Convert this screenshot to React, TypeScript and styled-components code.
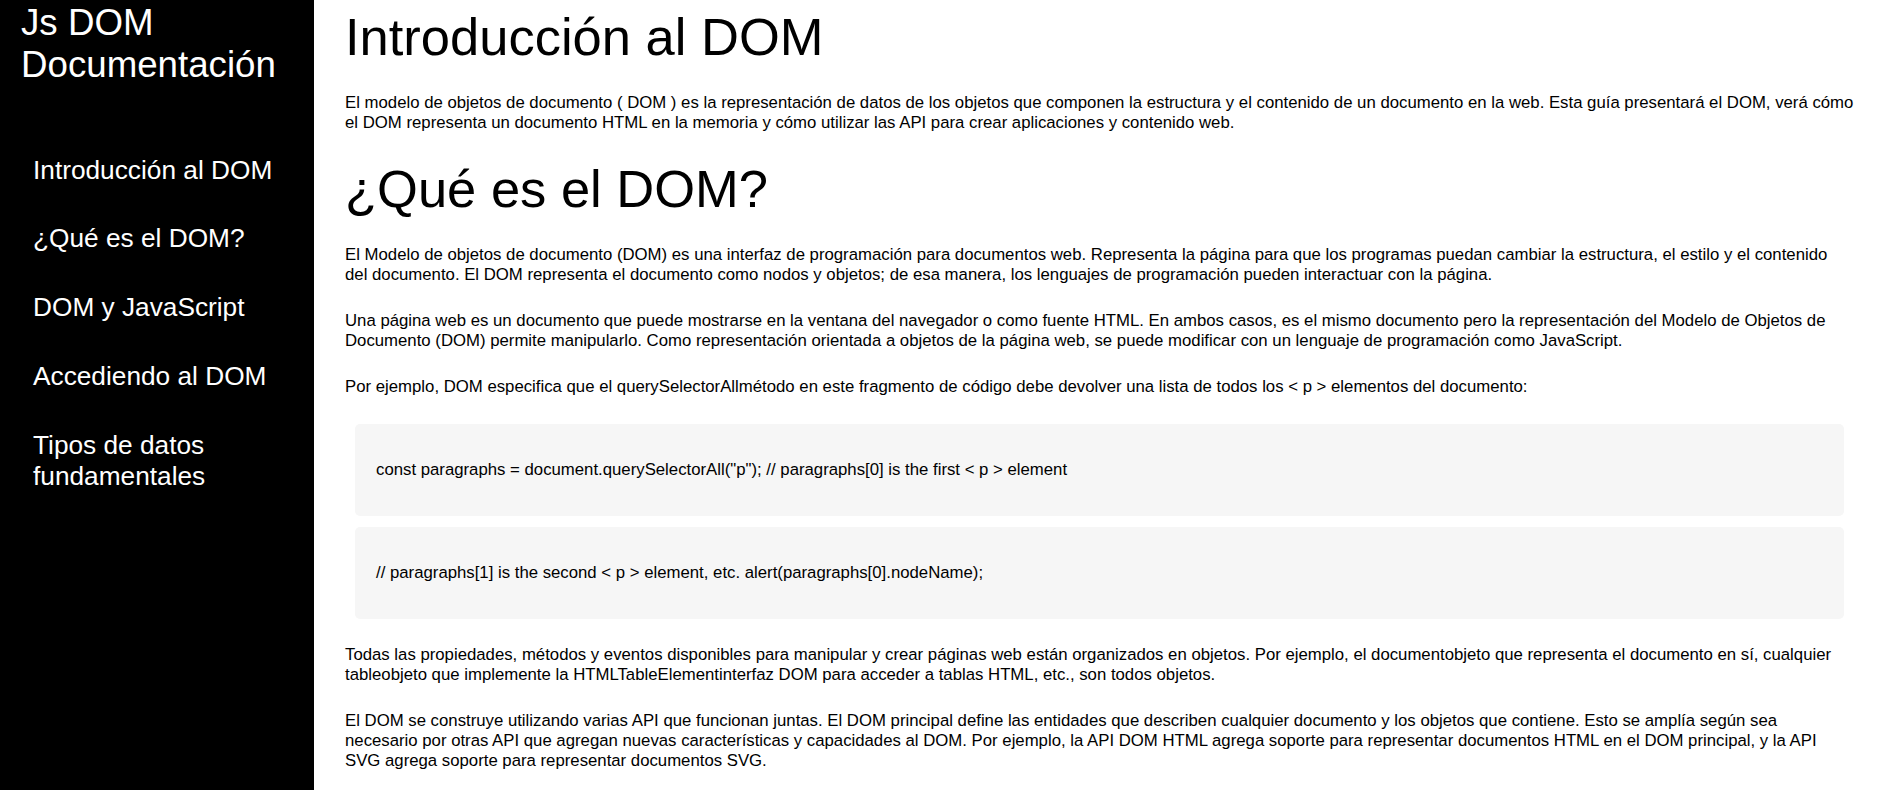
import React from "react";
import styled, { createGlobalStyle } from "styled-components";

const GlobalStyle = createGlobalStyle`
  html, body {
    margin: 0;
    padding: 0;
    background: #ffffff;
  }
  body {
    font-family: "Liberation Sans", Arial, sans-serif;
    color: #000000;
  }
  * { box-sizing: border-box; }
`;

const Page = styled.div`
  display: flex;
  align-items: stretch;
  min-height: 100vh;
`;

const Sidebar = styled.nav`
  flex: 0 0 314px;
  width: 314px;
  background: #000000;
  color: #ffffff;
  padding: 2px 0 0 21px;
`;

const SiteTitle = styled.header`
  font-size: 36.7px;
  line-height: normal;
  font-weight: 400;
  margin: 0;
`;

const NavList = styled.ul`
  list-style: none;
  margin: 68.5px 0 0 0;
  padding: 0 0 0 12px;
  display: flex;
  flex-direction: column;
  gap: 37.8px;
`;

const NavLink = styled.a`
  display: block;
  color: #ffffff;
  text-decoration: none;
  font-size: 26.25px;
  line-height: normal;
  max-width: 240px;
`;

const Main = styled.main`
  flex: 1 1 auto;
  min-width: 0;
  padding: 6px 36px 20px 31px;
`;

const Section = styled.section`
  display: flex;
  flex-direction: column;
  gap: 26px;
  & + & {
    margin-top: 24.5px;
  }
`;

const Heading = styled.h1`
  margin: 0;
  font-size: 52.5px;
  font-weight: 400;
  line-height: normal;
`;

const Para = styled.p`
  margin: 0;
  font-size: 16.75px;
  line-height: 20px;
`;

const CodeGroup = styled.div`
  display: flex;
  flex-direction: column;
  gap: 11px;
  margin: 1px 10px 0;
`;

const CodeBlock = styled.div`
  background: #f6f6f6;
  border-radius: 5px;
  padding: 36px 21px;
  font-size: 16.75px;
  line-height: 20px;
`;

const navItems = [
  "Introducción al DOM",
  "¿Qué es el DOM?",
  "DOM y JavaScript",
  "Accediendo al DOM",
  "Tipos de datos fundamentales",
];

export default function App() {
  return (
    <>
      <GlobalStyle />
      <Page>
        <Sidebar>
          <SiteTitle>Js DOM Documentación</SiteTitle>
          <NavList>
            {navItems.map((item) => (
              <li key={item}>
                <NavLink href="#">{item}</NavLink>
              </li>
            ))}
          </NavList>
        </Sidebar>
        <Main>
          <Section>
            <Heading>Introducción al DOM</Heading>
            <Para>
              El modelo de objetos de documento ( DOM ) es la representación de datos de los objetos que componen la estructura y el contenido de un documento en la web. Esta guía presentará el DOM, verá cómo el DOM representa un documento HTML en la memoria y cómo utilizar las API para crear aplicaciones y contenido web.
            </Para>
          </Section>
          <Section>
            <Heading as="h2">¿Qué es el DOM?</Heading>
            <Para>
              El Modelo de objetos de documento (DOM) es una interfaz de programación para documentos web. Representa la página para que los programas puedan cambiar la estructura, el estilo y el contenido del documento. El DOM representa el documento como nodos y objetos; de esa manera, los lenguajes de programación pueden interactuar con la página.
            </Para>
            <Para>
              Una página web es un documento que puede mostrarse en la ventana del navegador o como fuente HTML. En ambos casos, es el mismo documento pero la representación del Modelo de Objetos de Documento (DOM) permite manipularlo. Como representación orientada a objetos de la página web, se puede modificar con un lenguaje de programación como JavaScript.
            </Para>
            <Para>
              Por ejemplo, DOM especifica que el querySelectorAllmétodo en este fragmento de código debe devolver una lista de todos los &lt; p &gt; elementos del documento:
            </Para>
            <CodeGroup>
              <CodeBlock>
                const paragraphs = document.querySelectorAll("p"); // paragraphs[0] is the first &lt; p &gt; element
              </CodeBlock>
              <CodeBlock>
                // paragraphs[1] is the second &lt; p &gt; element, etc. alert(paragraphs[0].nodeName);
              </CodeBlock>
            </CodeGroup>
            <Para>
              Todas las propiedades, métodos y eventos disponibles para manipular y crear páginas web están organizados en objetos. Por ejemplo, el documentobjeto que representa el documento en sí, cualquier tableobjeto que implemente la HTMLTableElementinterfaz DOM para acceder a tablas HTML, etc., son todos objetos.
            </Para>
            <Para>
              El DOM se construye utilizando varias API que funcionan juntas. El DOM principal define las entidades que describen cualquier documento y los objetos que contiene. Esto se amplía según sea necesario por otras API que agregan nuevas características y capacidades al DOM. Por ejemplo, la API DOM HTML agrega soporte para representar documentos HTML en el DOM principal, y la API SVG agrega soporte para representar documentos SVG.
            </Para>
          </Section>
        </Main>
      </Page>
    </>
  );
}
